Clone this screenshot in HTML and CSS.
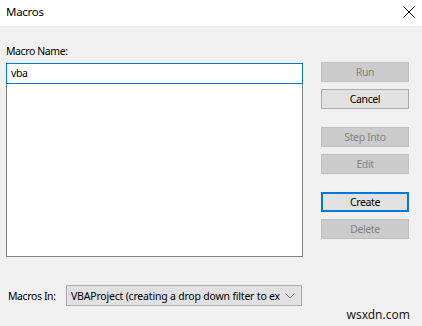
FILE: index.html
```html
<!DOCTYPE html>
<html>
<head>
<meta charset="utf-8">
<link rel="stylesheet" href="styles.css">
</head>
<body>
<div class="dialog">
  <div class="titlebar">
    <span class="title">Macros</span>
    <svg class="close" width="12" height="12" viewBox="0 0 12 12"><path d="M0.5 0.5 L11.5 11.5 M11.5 0.5 L0.5 11.5" stroke="#000" stroke-width="1" fill="none"/></svg>
  </div>
  <div class="content">
    <div class="main">
      <div class="left">
        <div class="label">Macro Name:</div>
        <div class="input">vba</div>
        <div class="list"></div>
      </div>
      <div class="buttons">
        <div class="group">
          <div class="btn disabled">Run</div>
          <div class="btn">Cancel</div>
        </div>
        <div class="group">
          <div class="btn disabled">Step Into</div>
          <div class="btn disabled">Edit</div>
        </div>
        <div class="group">
          <div class="btn default">Create</div>
          <div class="btn disabled">Delete</div>
        </div>
      </div>
    </div>
    <div class="bottom">
      <span class="inlabel">Macros In:</span>
      <div class="select">
        <span class="seltext">VBAProject (creating a drop down filter to ex</span>
        <svg class="chev" width="10" height="6" viewBox="0 0 10 6"><path d="M0.5 0.5 L5 5 L9.5 0.5" stroke="#8a8a8a" stroke-width="1" fill="none"/></svg>
      </div>
    </div>
  </div>
  <div class="watermark">wsxdn.com</div>
</div>
</body>
</html>
```
FILE: styles.css
```css
html, body {
  margin: 0;
  padding: 0;
}
body {
  width: 422px;
  height: 326px;
  overflow: hidden;
  font-family: "Noto Sans", "Open Sans", "DejaVu Sans", sans-serif;
  font-size: 10.5px;
  letter-spacing: -0.4px;
  color: #000;
}
.dialog {
  position: relative;
  width: 422px;
  height: 326px;
  background: #f0f0f0;
  display: flex;
  flex-direction: column;
}
.titlebar {
  height: 26px;
  background: #fff;
  display: flex;
  align-items: center;
  justify-content: space-between;
  padding: 0 7px 2px 6px;
  box-sizing: border-box;
}
.title {
  font-size: 11.5px;
  letter-spacing: -0.3px;
  line-height: 16px;
}
.close {
  display: block;
}
.content {
  flex: 1;
  display: flex;
  flex-direction: column;
}
.main {
  display: flex;
  padding: 18px 0 0 6px;
}
.left {
  width: 297px;
  display: flex;
  flex-direction: column;
}
.label {
  line-height: 15px;
  height: 15px;
  margin-bottom: 4px;
}
.input {
  height: 21px;
  box-sizing: border-box;
  border: 1px solid #0078d7;
  background: #fff;
  padding: 0 4px;
  line-height: 18px;
}
.list {
  height: 173px;
  box-sizing: border-box;
  border: 1px solid #828282;
  border-top: none;
  background: #fff;
}
.buttons {
  margin-left: 18px;
  margin-top: 18px;
  width: 88px;
  display: flex;
  flex-direction: column;
  gap: 18px;
}
.group {
  display: flex;
  flex-direction: column;
  gap: 7px;
}
.btn {
  height: 20px;
  box-sizing: border-box;
  border: 1px solid #adadad;
  background: #e1e1e1;
  text-align: center;
  line-height: 18px;
}
.btn.disabled {
  background: #cccccc;
  border-color: #bfbfbf;
  color: #838383;
}
.btn.default {
  border: 2px solid #0078d7;
  line-height: 16px;
}
.bottom {
  display: flex;
  align-items: center;
  padding: 28px 0 0 8px;
}
.inlabel {
  width: 58px;
  white-space: nowrap;
}
.select {
  width: 236px;
  height: 21px;
  box-sizing: border-box;
  border: 1px solid #adadad;
  background: #e1e1e1;
  display: flex;
  align-items: center;
  padding: 0 6px 0 4px;
  overflow: hidden;
}
.seltext {
  flex: 1;
  white-space: nowrap;
  overflow: hidden;
  line-height: 18px;
  letter-spacing: -0.2px;
}
.chev {
  margin-left: 4px;
  flex: none;
}
.watermark {
  position: absolute;
  right: 12px;
  bottom: 4px;
  font-size: 12px;
  letter-spacing: 0;
  line-height: 14px;
  color: #222;
}
```
